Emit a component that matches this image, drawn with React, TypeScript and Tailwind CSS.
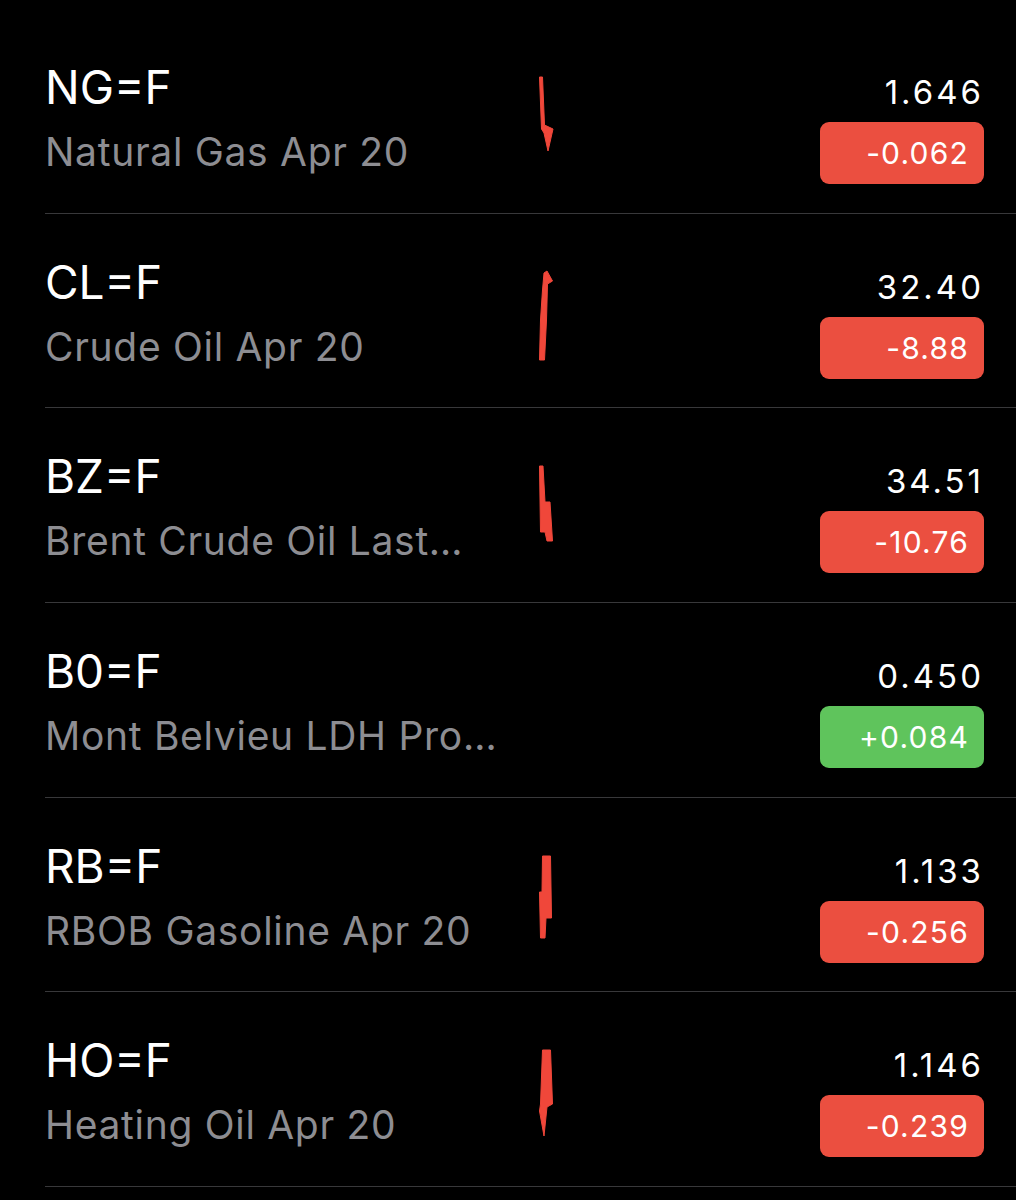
import React from "react";

type Quote = {
  symbol: string;
  name: string;
  price: string;
  change: string;
  up: boolean;
  spark?: string; // polygon points, viewBox 0 0 24 140
};

const quotes: Quote[] = [
  {
    symbol: "NG=F",
    name: "Natural Gas Apr 20",
    price: "1.646",
    change: "-0.062",
    up: false,
    spark: "5.5,28 8.5,28 10.5,76 19,80 14,102 10,84 7.5,80",
  },
  {
    symbol: "CL=F",
    name: "Crude Oil Apr 20",
    price: "32.40",
    change: "-8.88",
    up: false,
    spark: "10,29 13,27 18.5,37 13.5,40 12.5,76 10.5,116 5.5,116 6.5,76 8.5,46",
  },
  {
    symbol: "BZ=F",
    name: "Brent Crude Oil Last…",
    price: "34.51",
    change: "-10.76",
    up: false,
    spark: "5.5,28 9,28 11,64 16,64 18.5,103 13,103 11,94 6.5,94",
  },
  {
    symbol: "B0=F",
    name: "Mont Belvieu LDH Pro…",
    price: "0.450",
    change: "+0.084",
    up: true,
  },
  {
    symbol: "RB=F",
    name: "RBOB Gasoline Apr 20",
    price: "1.133",
    change: "-0.256",
    up: false,
    spark: "8.5,28 16.5,28 17.5,90 12,90 11,110 6.5,110 5.5,64 8,64",
  },
  {
    symbol: "HO=F",
    name: "Heating Oil Apr 20",
    price: "1.146",
    change: "-0.239",
    up: false,
    spark: "8.5,28 16.5,28 18.5,82 13,85 10,114 5.5,89 6.5,82",
  },
];

const QuoteRow: React.FC<{ q: Quote }> = ({ q }) => (
  <div className="flex h-[194.7px] border-b border-[#38383a]">
    <div className="w-[489px] pt-[45px]">
      <div className="text-[46px] leading-none text-white">{q.symbol}</div>
      <div className="mt-[22px] whitespace-nowrap text-[39px] leading-none tracking-[0.7px] text-[#8d8d92]">
        {q.name}
      </div>
    </div>
    <div className="w-[24px] pt-[30px]">
      {q.spark && (
        <svg width="24" height="140" viewBox="0 0 24 140">
          <polygon points={q.spark} fill="#f0473a" stroke="#f0473a" strokeWidth="1" strokeLinejoin="round" />
        </svg>
      )}
    </div>
    <div className="flex-1" />
    <div className="mr-[32px] flex w-[164px] flex-col items-end pt-[57px]">
      <div className="text-[33px] leading-none tracking-[3px] text-white">{q.price}</div>
      <div
        className={
          "mt-[13px] flex h-[62px] w-[164px] items-center justify-end rounded-[9px] pr-[15px] text-[30px] leading-none tracking-[0.04em] text-white " +
          (q.up ? "bg-[#5fc45c]" : "bg-[#eb4f40]")
        }
      >
        {q.change}
      </div>
    </div>
  </div>
);

export default function App() {
  return (
    <div
      className="min-h-[1200px] w-[1016px] bg-black pt-[19px]"
      style={{ fontFamily: "Inter, 'Liberation Sans', Arial, sans-serif" }}
    >
      <div className="pl-[45px]">
        {quotes.map((q) => (
          <QuoteRow key={q.symbol} q={q} />
        ))}
      </div>
    </div>
  );
}
